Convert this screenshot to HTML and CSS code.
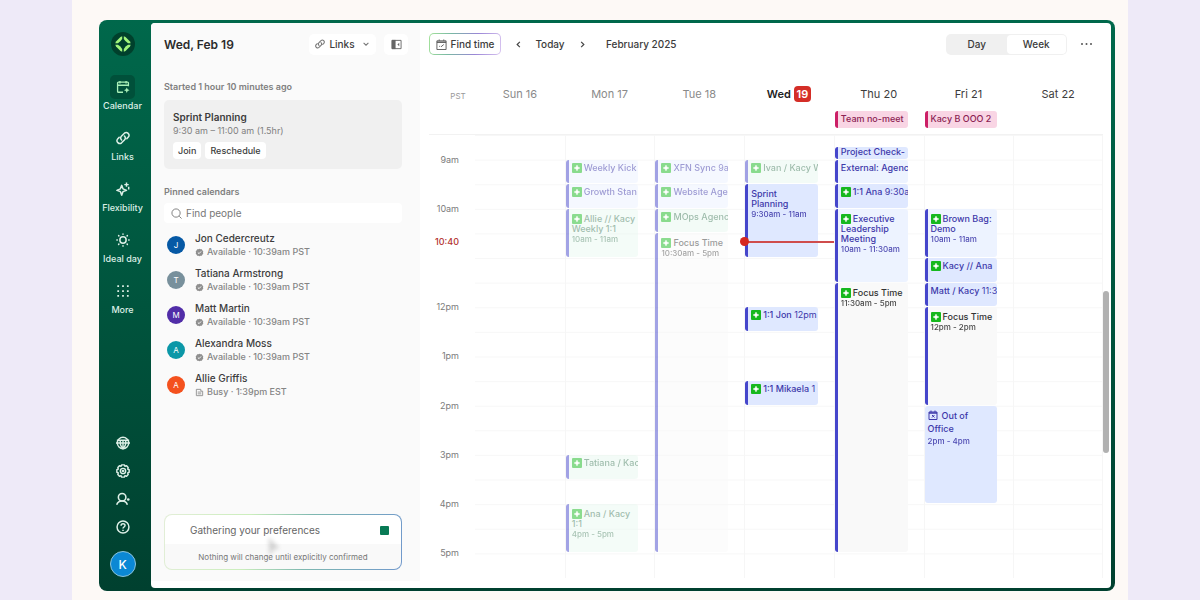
FILE: index.html
```html
<!DOCTYPE html>
<html lang="en">
<head>
    <meta charset="UTF-8">
    <meta name="viewport" content="width=device-width, initial-scale=1.0">
    <title>Calendar - February 2025</title>
    <link rel="stylesheet" href="styles.css">
</head>
<body>
    <!-- shared icons -->
    <svg class="sprite" aria-hidden="true">
        <symbol id="i-link" viewBox="0 0 16 16"><g fill="none" stroke="currentColor" stroke-width="1.7" stroke-linecap="round"><path d="M6.4 10.200a3.200 3.200 0 0 1 0-4.500l3.200-3.200a3.200 3.200 0 0 1 4.500 4.500l-1.700 1.700"/><path d="M9.600 5.800a3.200 3.200 0 0 1 0 4.500l-3.200 3.200a3.200 3.200 0 0 1-4.500-4.500l1.700-1.700"/></g></symbol>
        <symbol id="i-sync" viewBox="0 0 10 10"><rect width="10" height="10" rx="1" fill="#16b81e"/><path d="M5 2l.9 2.100L8 5l-2.100.9L5 8l-.9-2.100L2 5l2.100-.9z" fill="#fff" stroke="#fff" stroke-width=".4"/></symbol>
        <symbol id="i-ok" viewBox="0 0 10 10"><path d="M5 .8l1.200.7 1.400 0 .7 1.200.9 1-.3 1.300.3 1.300-.9 1-.7 1.200H6.200L5 9.200l-1.200-.7H2.400l-.7-1.200-.9-1L1.100 5 .8 3.700l.9-1 .7-1.200h1.400z" fill="#8f8f8f"/><path d="M3.200 5.100l1.300 1.200 2.300-2.500" fill="none" stroke="#fff" stroke-width="1"/></symbol>
    </svg>

    <div class="stage">
        <div class="app">
            <nav class="rail">
                <a class="logo" href="#" aria-label="Home">
                    <svg viewBox="0 0 24 24" fill="#a2f57c"><path id="wedge" d="M11.200 4.300L9.500 5 5 9.500l-.7 1.700H7Q9.600 9.600 11.200 7z"/><use href="#wedge" transform="rotate(90 12 12)"/><use href="#wedge" transform="rotate(180 12 12)"/><use href="#wedge" transform="rotate(270 12 12)"/></svg>
                </a>
                <ul class="rail-nav">
                    <li><a class="active" href="#">
                        <span class="rail-icon"><svg viewBox="0 0 16 16" fill="none" stroke="currentColor" stroke-width="1.500"><path d="M8 14H2.800a1 1 0 0 1-1-1V3.500a1 1 0 0 1 1-1h10.400a1 1 0 0 1 1 1V7M1.800 6h12.400M4.500 1v3M11.500 1v3"/><path d="M12.300 8.500l1 2.200 2.200 1-2.200 1-1 2.200-1-2.200-2.200-1 2.200-1z" fill="currentColor" stroke="none"/></svg></span>
                        Calendar</a></li>
                    <li><a href="#">
                        <span class="rail-icon"><svg><use href="#i-link"/></svg></span>
                        Links</a></li>
                    <li><a href="#">
                        <span class="rail-icon"><svg viewBox="0 0 16 16" fill="none" stroke="currentColor" stroke-width="1.700" stroke-linejoin="round"><path d="M6.500 3.800L8 7.800l4 1.700-4 1.500-1.500 4L5 11 1 9.500l4-1.700z"/><path d="M12 .5v5M9.500 3h5M14.500 5.500v3"/></svg></span>
                        Flexibility</a></li>
                    <li><a href="#">
                        <span class="rail-icon"><svg viewBox="0 0 16 16" fill="none" stroke="currentColor" stroke-width="1.700" stroke-linecap="round"><circle cx="8" cy="8" r="3.600"/><path d="M8 1v.5M8 14.500v.5M1 8h.5M14.500 8h.5M3 3l.3.300M12.700 12.700l.3.300M3 13l.3-.3M12.700 3.300l.3-.3"/></svg></span>
                        Ideal day</a></li>
                    <li><a href="#">
                        <span class="rail-icon"><svg viewBox="0 0 16 16" fill="none" stroke="currentColor" stroke-width="2" stroke-dasharray="2 3.500"><path d="M1.500 2.500h13M1.500 8h13M1.500 13.500h13"/></svg></span>
                        More</a></li>
                </ul>
                <ul class="rail-tools">
                    <li><a href="#" aria-label="Language"><svg viewBox="0 0 16 16" fill="none" stroke="currentColor" stroke-width="1.600"><circle cx="8" cy="8" r="6.500"/><path d="M0 8h16M1 4.800h14M8 4.800v9.700M5 5c-.8 4 .5 7 3 9.500 2.500-2.500 3.800-5.500 3-9.500"/></svg></a></li>
                    <li><a href="#" aria-label="Settings"><svg viewBox="0 0 16 16" fill="none" stroke="currentColor" stroke-width="1.700" stroke-linejoin="round"><path d="M6.500 1h3l.7 1.600 1.900-.5 1.800 1.800-.5 1.900 1.600.7v3l-1.600.7.5 1.900-1.800 1.800-1.900-.5L9.500 15h-3l-.7-1.600-1.900.5-1.800-1.800.5-1.900L1 9.500v-3l1.600-.7-.5-1.900 1.800-1.800 1.900.5z"/><circle cx="8" cy="8" r="3"/><circle cx="8" cy="8" r=".6"/></svg></a></li>
                    <li><a href="#" aria-label="Invite"><svg viewBox="0 0 16 16" fill="none" stroke="currentColor" stroke-width="1.800"><circle cx="7" cy="6" r="4.300"/><path d="M.8 14.500c.8-2.300 2.500-4.200 6.200-4.200s5.200 1.900 6 4.200"/><circle cx="14" cy="8.500" r="1.500" fill="currentColor" stroke="none"/></svg></a></li>
                    <li><a href="#" aria-label="Help"><svg viewBox="0 0 16 16" fill="none" stroke="currentColor" stroke-width="1.700"><circle cx="8" cy="8" r="6.800"/><path d="M5.800 6.500c0-3 4.500-3 4.500-.2C10.300 8 8 8 8 9.800M8 11v1.500"/></svg></a></li>
                </ul>
                <a class="me" href="#" aria-label="Account">K</a>
            </nav>

            <div class="content">
                <aside class="panel">
                    <header class="panel-head">
                        <h1>Wed, Feb 19</h1>
                        <button class="chip links-btn"><svg><use href="#i-link"/></svg>Links<svg class="chev" viewBox="0 0 10 10" fill="none" stroke="currentColor" stroke-width="1.300"><path d="M2 3.500l3 3 3-3"/></svg></button>
                        <button class="chip square-btn" aria-label="Collapse panel"><svg viewBox="0 0 12 12"><path d="M1 1.500h10v9H1z" fill="none" stroke="#666"/><path d="M1 1h4v10H1z" fill="#666"/><path d="M9 4v4L7 6z" fill="#666"/></svg></button>
                    </header>

                    <h2 class="label">Started 1 hour 10 minutes ago</h2>
                    <section class="now-card">
                        <h3>Sprint Planning</h3>
                        <p>9:30 am – 11:00 am (1.5hr)</p>
                        <button>Join</button>
                        <button>Reschedule</button>
                    </section>

                    <h2 class="label">Pinned calendars</h2>
                    <label class="search">
                        <svg viewBox="0 0 12 12" fill="none" stroke="#777"><circle cx="5.500" cy="5.500" r="4.500"/><path d="M9 9l2.500 2.500"/></svg>
                        <input type="text" placeholder="Find people" aria-label="Find people">
                    </label>
                    <ul class="people">
                        <li><span class="avatar blue">J</span><div><b>Jon Cedercreutz</b><small><svg><use href="#i-ok"/></svg>Available · 10:39am PST</small></div></li>
                        <li><span class="avatar slate">T</span><div><b>Tatiana Armstrong</b><small><svg><use href="#i-ok"/></svg>Available · 10:39am PST</small></div></li>
                        <li><span class="avatar purple">M</span><div><b>Matt Martin</b><small><svg><use href="#i-ok"/></svg>Available · 10:39am PST</small></div></li>
                        <li><span class="avatar teal">A</span><div><b>Alexandra Moss</b><small><svg><use href="#i-ok"/></svg>Available · 10:39am PST</small></div></li>
                        <li><span class="avatar orange">A</span><div><b>Allie Griffis</b><small><svg viewBox="0 0 10 10" fill="none" stroke="#8f8f8f"><path d="M1.500 1.500h5v2h2v5h-7zM3 4.500h4M3 6.500h4"/></svg>Busy · 1:39pm EST</small></div></li>
                    </ul>

                    <section class="assistant">
                        <div class="assistant-row">
                            <p>Gathering your preferences</p>
                            <button class="stop" aria-label="Stop"></button>
                        </div>
                        <p class="note">Nothing will change until explicitly confirmed</p>
                        <svg class="pointer" viewBox="0 0 16 22"><path d="M3 2l10 10-5 1-4 6z" fill="#777"/></svg>
                    </section>
                </aside>

                <main class="calendar">
                    <header class="toolbar">
                        <button class="find-time"><svg viewBox="0 0 12 12" fill="none" stroke="#555"><path d="M1 2h10v9.500H1zM3.500.5V2M8.500.5V2"/><path d="M1 3.500h10" stroke-width="1.500"/><path d="M3.500 8h1M5.500 8.500l3-2.500"/></svg>Find time</button>
                        <button class="nav-btn" aria-label="Previous week"><svg viewBox="0 0 10 10" fill="none" stroke="#444" stroke-width="1.300"><path d="M6.500 2l-3 3 3 3"/></svg></button>
                        <button class="today">Today</button>
                        <button class="nav-btn" aria-label="Next week"><svg viewBox="0 0 10 10" fill="none" stroke="#444" stroke-width="1.300"><path d="M3.500 2l3 3-3 3"/></svg></button>
                        <h2>February 2025</h2>
                        <div class="switch">
                            <button>Day</button>
                            <button class="on">Week</button>
                        </div>
                        <button class="more" aria-label="More options"><svg viewBox="0 0 12 4" fill="#555"><circle cx="1.500" cy="2" r="1"/><circle cx="6" cy="2" r="1"/><circle cx="10.500" cy="2" r="1"/></svg></button>
                    </header>

                    <div class="week week-head">
                        <span class="zone">PST</span>
                        <span class="past">Sun 16</span>
                        <span class="past">Mon 17</span>
                        <span class="past">Tue 18</span>
                        <span class="current">Wed <mark>19</mark></span>
                        <span>Thu 20</span>
                        <span>Fri 21</span>
                        <span>Sat 22</span>
                    </div>
                    <div class="week all-day">
                        <div class="event pink thu">Team no-meet</div>
                        <div class="event pink fri">Kacy B OOO 2</div>
                    </div>

                    <!-- one row per 15 minutes, 8:30am to 5:30pm -->
                    <div class="week week-body">
                        <div class="times">
                            <time style="grid-row: 2 / 4">9am</time>
                            <time style="grid-row: 6 / 8">10am</time>
                            <time style="grid-row: 14 / 16">12pm</time>
                            <time style="grid-row: 18 / 20">1pm</time>
                            <time style="grid-row: 22 / 24">2pm</time>
                            <time style="grid-row: 26 / 28">3pm</time>
                            <time style="grid-row: 30 / 32">4pm</time>
                            <time style="grid-row: 34 / 36">5pm</time>
                            <time class="now-time" style="top: 24.2%">10:40</time>
                        </div>
                        <div class="day"></div>
                        <div class="day">
                            <div class="event external done" style="grid-row: 3 / 5"><svg><use href="#i-sync"/></svg>Weekly Kick</div>
                            <div class="event external done" style="grid-row: 5 / 7"><svg><use href="#i-sync"/></svg>Growth Stan</div>
                            <div class="event green done tall" style="grid-row: 7 / 11"><svg><use href="#i-sync"/></svg>Allie // Kacy Weekly 1:1 <small>10am - 11am</small></div>
                            <div class="event green done" style="grid-row: 27 / 29"><svg><use href="#i-sync"/></svg>Tatiana / Kac</div>
                            <div class="event green done tall" style="grid-row: 31 / 35"><svg><use href="#i-sync"/></svg>Ana / Kacy<br>1:1 <small>4pm - 5pm</small></div>
                        </div>
                        <div class="day">
                            <div class="event external done" style="grid-row: 3 / 5"><svg><use href="#i-sync"/></svg>XFN Sync <i>9a</i></div>
                            <div class="event external done" style="grid-row: 5 / 7"><svg><use href="#i-sync"/></svg>Website Age</div>
                            <div class="event green done" style="grid-row: 7 / 9"><svg><use href="#i-sync"/></svg>MOps Agenc</div>
                            <div class="event focus done tall" style="grid-row: 9 / 35"><svg><use href="#i-sync"/></svg>Focus Time <small>10:30am - 5pm</small></div>
                        </div>
                        <div class="day">
                            <div class="event green done" style="grid-row: 3 / 5"><svg><use href="#i-sync"/></svg>Ivan / Kacy W</div>
                            <div class="event tall" style="grid-row: 5 / 11">Sprint<br>Planning <small>9:30am - 11am</small></div>
                            <div class="event" style="grid-row: 15 / 17"><svg><use href="#i-sync"/></svg>1:1 Jon <i>12pm</i></div>
                            <div class="event" style="grid-row: 21 / 23"><svg><use href="#i-sync"/></svg>1:1 Mikaela <i>1</i></div>
                            <div class="now-line" style="top: 24.2%"></div>
                        </div>
                        <div class="day">
                            <div class="event short" style="grid-row: 2 / 3">Project Check-</div>
                            <div class="event external" style="grid-row: 3 / 5">External: Agenc</div>
                            <div class="event" style="grid-row: 5 / 7"><svg><use href="#i-sync"/></svg>1:1 Ana <i>9:30a</i></div>
                            <div class="event external tall" style="grid-row: 7 / 13"><svg><use href="#i-sync"/></svg>Executive Leadership Meeting <small>10am - 11:30am</small></div>
                            <div class="event focus tall" style="grid-row: 13 / 35"><svg><use href="#i-sync"/></svg>Focus Time <small>11:30am - 5pm</small></div>
                        </div>
                        <div class="day">
                            <div class="event external tall" style="grid-row: 7 / 11"><svg><use href="#i-sync"/></svg>Brown Bag: Demo <small>10am - 11am</small></div>
                            <div class="event" style="grid-row: 11 / 13"><svg><use href="#i-sync"/></svg>Kacy // Ana</div>
                            <div class="event" style="grid-row: 13 / 15">Matt / Kacy <i>11:3</i></div>
                            <div class="event focus tall" style="grid-row: 15 / 23"><svg><use href="#i-sync"/></svg>Focus Time <small>12pm - 2pm</small></div>
                            <div class="event ooo" style="grid-row: 23 / 31"><svg viewBox="0 0 10 10" fill="none" stroke="currentColor"><path d="M1 2h8v7.500H1zM3 .5V2M7 .5V2"/><path d="M1 3h8" stroke-width="1.500"/><path d="M4 5l2.500 2.500M6.500 5L4 7.500"/></svg>Out of Office <small>2pm - 4pm</small></div>
                        </div>
                        <div class="day"></div>
                    </div>
                    <div class="scrollbar"></div>
                </main>
            </div>
        </div>
    </div>
</body>
</html>
```

FILE: styles.css
```css
* {
    box-sizing: border-box;
}
body {
    margin: 0;
    background: #eeeaf8;
    color: #3c3c3c;
    font-family: Inter, "Liberation Sans", sans-serif;
    font-size: 11px;
}
h1, h2, h3, p, ul {
    margin: 0;
    padding: 0;
}
ul {
    list-style: none;
}
a {
    color: inherit;
    text-decoration: none;
}
button {
    margin: 0;
    padding: 0;
    border: none;
    background: none;
    color: inherit;
    font: inherit;
    cursor: pointer;
}
svg {
    display: block;
    flex: none;
}
.sprite {
    position: absolute;
    width: 0;
    height: 0;
}

/* window frame */
.stage {
    height: 100vh;
    min-height: 560px;
    margin: 0 72px;
    padding: 20px 13px 9px 27px;
    background: #fdf9f6;
}
.app {
    display: grid;
    grid-template-columns: 52px 1fr;
    height: 100%;
    padding: 3px 4px 3px 0;
    border-radius: 8px;
    background: linear-gradient(#00684b, #00402f);
}
.content {
    display: flex;
    min-width: 0;
    padding-bottom: 7px;
    border-radius: 4px;
    background: #fff;
}

/* left rail */
.rail {
    display: flex;
    flex-direction: column;
    align-items: center;
    padding: 9px 5px 11px 0;
    color: #dcefe6;
}
.logo {
    width: 24px;
    height: 24px;
    border-radius: 50%;
    background: #00402c;
}
.rail-nav {
    display: grid;
    gap: 15px;
    margin-top: 19px;
}
.rail-nav a {
    display: flex;
    flex-direction: column;
    align-items: center;
    gap: 1px;
    font-size: 9px;
    font-weight: 500;
    line-height: 11px;
    white-space: nowrap;
}
.rail-icon {
    display: grid;
    place-items: center;
    width: 25px;
    height: 24px;
    border-radius: 5px;
}
.rail-icon svg {
    width: 14px;
    height: 14px;
}
.active .rail-icon {
    background: #00503a;
    color: #a9f0b8;
}
.rail-tools {
    display: grid;
    gap: 14px;
    margin-top: auto;
}
.rail-tools svg {
    width: 14px;
    height: 14px;
}
.me {
    display: grid;
    place-items: center;
    width: 26px;
    height: 26px;
    margin-top: 17px;
    border: 1px solid #8cc4dc;
    border-radius: 50%;
    background: #0b88d4;
    color: #fff;
    font-size: 12px;
    font-weight: 500;
}

/* side panel */
.panel {
    display: flex;
    flex-direction: column;
    flex: none;
    width: 269px;
    padding: 10px 18px 11px 13px;
    border-radius: 4px 0 0 0;
    background: #fafafa;
}
.panel-head {
    display: flex;
    align-items: center;
    gap: 8px;
    height: 22px;
    margin: 0 -6px 25px 0;
}
.panel-head h1 {
    flex: 1;
    color: #2b2b2b;
    font-size: 12px;
    font-weight: 600;
}
.chip {
    display: flex;
    align-items: center;
    justify-content: center;
    gap: 4px;
    height: 21px;
    border-radius: 5px;
    background: #fff;
    font-size: 10px;
    font-weight: 500;
}
.links-btn {
    width: 67px;
}
.links-btn svg {
    width: 10px;
    height: 10px;
    color: #777;
}
.links-btn .chev {
    width: 8px;
    height: 8px;
    margin-left: 3px;
}
.square-btn {
    width: 24px;
}
.square-btn svg {
    width: 11px;
    height: 11px;
}
.label {
    color: #808080;
    font-size: 9px;
    font-weight: 600;
    line-height: 14px;
}
.now-card {
    margin: 6px 0 16px;
    padding: 10px 9px;
    border-radius: 5px;
    background: #f0f0f0;
    line-height: 14px;
}
.now-card h3 {
    font-size: 10px;
    font-weight: 600;
}
.now-card p {
    margin-bottom: 4px;
    color: #808080;
    font-size: 9px;
}
.now-card button {
    height: 17px;
    margin-right: 1px;
    padding: 0 5px;
    border-radius: 4px;
    background: #fff;
    font-size: 9px;
    font-weight: 500;
    vertical-align: top;
}
.search {
    display: flex;
    align-items: center;
    gap: 4px;
    height: 20px;
    margin: 4px 0 8px;
    padding: 0 7px;
    border-radius: 4px;
    background: #fff;
}
.search svg {
    width: 11px;
    height: 11px;
}
.search input {
    flex: 1;
    min-width: 0;
    padding: 0;
    border: none;
    outline: none;
    background: none;
    font: 10px Inter, sans-serif;
}
.search input::placeholder {
    color: #777;
}
.people {
    display: grid;
    gap: 7px;
}
.people li {
    display: flex;
    align-items: center;
    gap: 10px;
    padding-left: 3px;
    line-height: 14px;
}
.people b {
    display: block;
    font-size: 10px;
    font-weight: 500;
}
.people small {
    display: flex;
    align-items: center;
    gap: 3px;
    color: #858585;
    font-size: 9px;
    font-weight: 500;
}
.people small svg {
    width: 9px;
    height: 9px;
}
.avatar {
    display: grid;
    place-items: center;
    width: 18px;
    height: 18px;
    border-radius: 50%;
    color: #fff;
    font-size: 8px;
}
.blue { background: #0659a5; }
.slate { background: #78909c; }
.purple { background: #512da8; }
.teal { background: #0b97a7; }
.orange { background: #f4511e; }

.assistant {
    position: relative;
    margin-top: auto;
    overflow: hidden;
    border: 1px solid transparent;
    border-radius: 8px;
    background: linear-gradient(#fff 0 54%, #f9f9f9 54%) padding-box,
        linear-gradient(100deg, #e3eed8, #cbeebc 35%, #7eb8b0 60%, #7199cc) border-box;
}
.assistant-row {
    display: flex;
    align-items: center;
    justify-content: space-between;
    height: 30px;
    padding: 0 12px 0 25px;
    color: #666;
}
.assistant-row p {
    font-size: 10px;
}
.stop {
    width: 9px;
    height: 9px;
    border-radius: 1px;
    background: #087a55;
}
.note {
    color: #777;
    font-size: 8px;
    line-height: 24px;
    text-align: center;
}
.pointer {
    position: absolute;
    top: 20px;
    left: 100px;
    width: 18px;
    height: 24px;
    filter: blur(2px);
    opacity: 0.3;
}

/* calendar */
.calendar {
    position: relative;
    display: flex;
    flex-direction: column;
    flex: 1;
    min-width: 0;
    padding: 10px 8px 3px 9px;
}
.toolbar {
    display: flex;
    align-items: center;
    height: 22px;
    padding-right: 10px;
    font-size: 10px;
    font-weight: 500;
}
.find-time {
    display: flex;
    align-items: center;
    justify-content: center;
    gap: 4px;
    width: 72px;
    height: 22px;
    border: 1px solid transparent;
    border-radius: 5px;
    background: linear-gradient(#fff, #fff) padding-box,
        linear-gradient(100deg, #a5e39b, #79b8a4 30%, #9a86d6 65%, #d8c4f0) border-box;
}
.find-time svg {
    width: 11px;
    height: 11px;
}
.nav-btn {
    display: grid;
    place-items: center;
    width: 34px;
    height: 22px;
}
.nav-btn svg {
    width: 9px;
    height: 9px;
}
.today {
    width: 30px;
}
.toolbar h2 {
    margin: 0 auto 0 7px;
    font-size: 10px;
    font-weight: 500;
}
.switch {
    display: flex;
    width: 121px;
    height: 21px;
    padding: 1px;
    border-radius: 5px;
    background: #f0f0f0;
}
.switch button {
    flex: 1;
    border-radius: 4px;
}
.switch .on {
    background: #fff;
}
.more {
    margin-left: 13px;
}
.more svg {
    width: 13px;
    height: 4px;
}
.week {
    display: grid;
    grid-template-columns: 46px repeat(7, minmax(0, 1fr));
}
.week-head {
    height: 18px;
    margin-top: 30px;
    line-height: 18px;
    text-align: center;
}
.week-head .past {
    color: #8a8a8a;
}
.week-head .zone {
    padding: 2px 0 0 12px;
    color: #999;
    font-size: 8px;
}
.week-head .current {
    color: #222;
    font-weight: 600;
}
.week-head mark {
    display: inline-block;
    padding: 0 3px;
    border-radius: 4px;
    background: #d42e27;
    color: #fff;
    line-height: 16px;
}
.all-day {
    height: 17px;
    margin: 8px 0 6px;
}
.thu { grid-column: 6; }
.fri { grid-column: 7; }

.week-body {
    flex: 1;
    min-height: 0;
    border-top: 1px solid #f2f2f2;
}
.times,
.day {
    position: relative;
    display: grid;
    grid-template-rows: repeat(36, minmax(0, 1fr));
}
.times {
    justify-items: end;
    align-items: center;
    padding-right: 16px;
    color: #7c7c7c;
    font-size: 9px;
    line-height: 12px;
}
.now-time {
    position: absolute;
    right: 16px;
    color: #b3332f;
    font-weight: 500;
    transform: translateY(-50%);
}
.day {
    border-left: 1px solid #f6f6f6;
    background: linear-gradient(#f7f7f7 1px, transparent 1px) 0 0 / 100% calc(100% / 18);
}
.day:nth-child(2) {
    border-left-color: transparent;
}
.day:last-child {
    border-right: 1px solid #f6f6f6;
}
.event {
    margin: 0 16px 1px 0;
    padding: 3px 0 0 3px;
    overflow: hidden;
    border-left: 3px solid #4546cb;
    border-radius: 3px;
    background: #dfe8ff;
    color: #3d38aa;
    font-size: 9px;
    font-weight: 500;
    line-height: 10px;
    white-space: nowrap;
}
.event svg {
    display: inline-block;
    width: 10px;
    height: 10px;
    margin-right: 2px;
    vertical-align: bottom;
}
.event i {
    font-style: normal;
    font-weight: 400;
}
.event small {
    display: block;
    font-size: 8px;
    font-weight: 500;
    opacity: 0.9;
    white-space: nowrap;
}
.event.tall {
    padding-top: 5px;
    white-space: normal;
}
.event.short {
    padding-top: 0;
}
.event.external {
    background: #edf3ff;
}
.event.green {
    background: #e9f9f0;
    color: #3f7a5a;
}
.event.focus {
    background: #f9f9f9;
    color: #333;
}
.event.done {
    opacity: 0.5;
}
.event.pink {
    margin: 0 16px 0 1px;
    border-color: #cc1f66;
    background: #f9d5e4;
    color: #8c2253;
}
.event.ooo {
    padding: 3px 20px 0 3px;
    border-left: none;
    line-height: 13px;
    white-space: normal;
}
.ooo svg {
    margin-right: 4px;
    vertical-align: -1px;
}
.now-line {
    position: absolute;
    left: 0;
    right: 0;
    height: 2px;
    background: #cf4c4c;
    transform: translateY(-50%);
}
.now-line::before {
    content: "";
    position: absolute;
    top: -4px;
    left: -5px;
    width: 9px;
    height: 9px;
    border-radius: 50%;
    background: #d5281f;
}
.scrollbar {
    position: absolute;
    top: 48%;
    right: 2px;
    width: 6px;
    height: 29%;
    border-radius: 3px;
    background: #b1b1b1;
}
```
